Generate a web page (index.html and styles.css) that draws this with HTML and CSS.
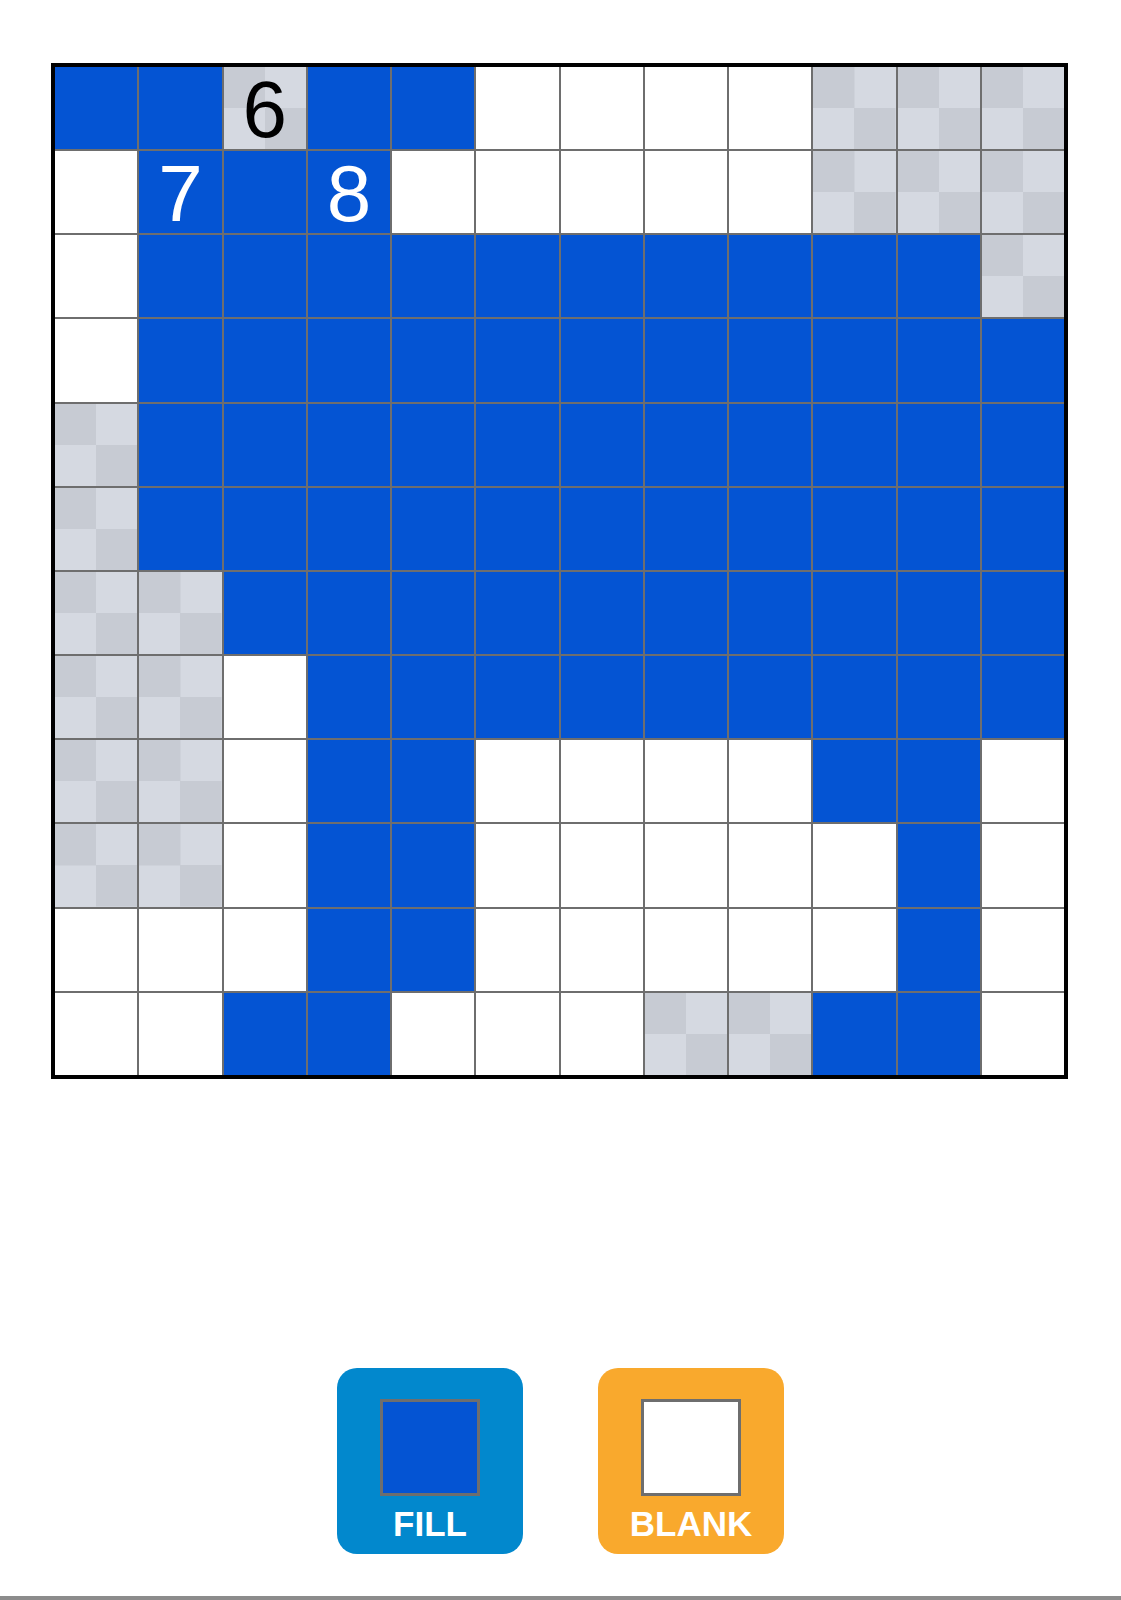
FILE: index.html
```html
<!DOCTYPE html>
<html>
<head>
<meta charset="utf-8">
<link rel="stylesheet" href="styles.css">
</head>
<body>
<div class="page">
  <div class="board" id="board"></div>
  <div class="tools">
    <div class="tool tool-fill">
      <div class="swatch swatch-fill"></div>
      <div class="tool-label">FILL</div>
    </div>
    <div class="tool tool-blank">
      <div class="swatch swatch-blank"></div>
      <div class="tool-label">BLANK</div>
    </div>
  </div>
  <div class="bottom-bar"></div>
</div>
<script src="app.js"></script>
</body>
</html>
```
FILE: app.js
```js
var rows = [
  "BBGBBWWWWGGG",
  "WBBBWWWWWGGG",
  "WBBBBBBBBBBG",
  "WBBBBBBBBBBB",
  "GBBBBBBBBBBB",
  "GBBBBBBBBBBB",
  "GGBBBBBBBBBB",
  "GGWBBBBBBBBB",
  "GGWBBWWWWBBW",
  "GGWBBWWWWWBW",
  "WWWBBWWWWWBW",
  "WWBBWWWGGBBW"
];
var nums = { "0,2": "6", "1,1": "7", "1,3": "8" };
var cls = { B: "cell-fill", W: "cell-blank", G: "cell-unknown" };
var board = document.getElementById("board");
rows.forEach(function (r, i) {
  r.split("").forEach(function (c, j) {
    var d = document.createElement("div");
    d.className = "cell " + cls[c];
    var n = nums[i + "," + j];
    if (n) {
      var s = document.createElement("span");
      s.className = "num";
      s.textContent = n;
      d.appendChild(s);
    }
    board.appendChild(d);
  });
});
```
FILE: styles.css
```css
html, body {
  margin: 0;
  padding: 0;
  background: #ffffff;
}
.page {
  width: 1121px;
  height: 1600px;
  padding-top: 63px;
  box-sizing: border-box;
  display: flex;
  flex-direction: column;
  align-items: center;
  font-family: "Liberation Sans", Arial, sans-serif;
}
.board {
  width: 1009px;
  height: 1008px;
  border: 4px solid #000000;
  background: #6e6e6e;
  display: grid;
  grid-template-columns: repeat(12, 1fr);
  grid-template-rows: repeat(12, 1fr);
  gap: 2px;
  margin-left: -2px;
}
.cell {
  display: flex;
  align-items: center;
  justify-content: center;
  min-width: 0;
  min-height: 0;
}
.cell-fill {
  background: #0454d3;
}
.cell-blank {
  background: #ffffff;
}
.cell-unknown {
  background:
    linear-gradient(#c7cbd3, #c7cbd3) left top / 50% 50% no-repeat,
    linear-gradient(#c7cbd3, #c7cbd3) right bottom / 50% 50% no-repeat,
    #d5d9e1;
}
.num {
  font-size: 80px;
  line-height: 72px;
  font-family: "Liberation Sans", Arial, sans-serif;
  padding-top: 4px;
}
.cell-fill .num {
  color: #ffffff;
}
.cell-unknown .num {
  color: #000000;
}
.tools {
  display: flex;
  gap: 75px;
  margin-top: 289px;
}
.tool {
  width: 186px;
  height: 186px;
  border-radius: 20px;
  display: flex;
  flex-direction: column;
  align-items: center;
  padding-top: 31px;
  box-sizing: border-box;
}
.tool-fill {
  background: #0288cd;
}
.tool-blank {
  background: #f9a92d;
}
.swatch {
  width: 100px;
  height: 97px;
  box-sizing: border-box;
  border: 3px solid #6e6e6e;
}
.swatch-fill {
  background: #0454d3;
}
.swatch-blank {
  background: #ffffff;
}
.tool-label {
  color: #ffffff;
  font-weight: bold;
  font-size: 35px;
  line-height: 1;
  margin-top: 10px;
}
.bottom-bar {
  width: 1121px;
  height: 4px;
  background: #8c8c8c;
  margin-top: auto;
}
```
